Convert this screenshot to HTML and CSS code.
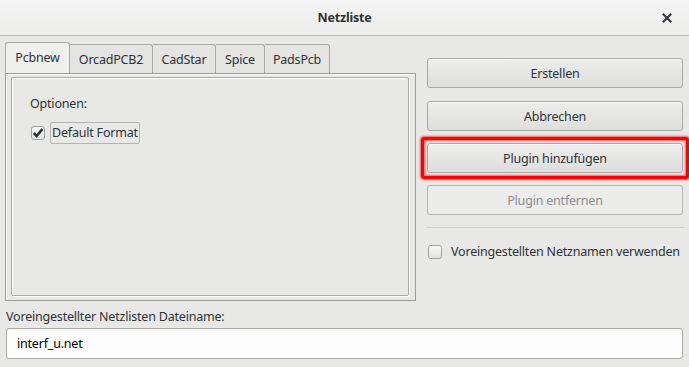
FILE: index.html
```html
<!DOCTYPE html>
<html lang="de">
<head>
<meta charset="utf-8">
<title>Netzliste</title>
<link rel="stylesheet" href="styles.css">
</head>
<body>
<div class="window">
  <header class="titlebar">
    <span class="title">Netzliste</span>
    <span class="close">
      <svg width="10" height="10" viewBox="0 0 10 10"><path d="M1.5 1.5 L8.5 8.5 M8.5 1.5 L1.5 8.5" stroke="#2e3436" stroke-width="2" stroke-linecap="square"/></svg>
    </span>
  </header>
  <main class="content">
    <div class="top-row">
      <section class="notebook">
        <div class="tabs">
          <div class="tab active">Pcbnew</div>
          <div class="tab">OrcadPCB2</div>
          <div class="tab">CadStar</div>
          <div class="tab">Spice</div>
          <div class="tab">PadsPcb</div>
        </div>
        <div class="page">
          <div class="page-inner">
            <div class="options-label">Optionen:</div>
            <div class="check-row">
              <span class="checkbox checked">
                <svg width="12" height="12" viewBox="0 0 12 12"><path d="M1.8 6 L4.6 9 L10.4 2.2" fill="none" stroke="#2e3436" stroke-width="2.6"/></svg>
              </span>
              <span class="focus-label">Default Format</span>
            </div>
          </div>
        </div>
      </section>
      <aside class="actions">
        <button class="btn">Erstellen</button>
        <button class="btn">Abbrechen</button>
        <div class="highlight"><button class="btn">Plugin hinzufügen</button></div>
        <button class="btn disabled">Plugin entfernen</button>
        <hr class="sep">
        <label class="check-line">
          <span class="checkbox"></span>
          <span>Voreingestellten Netznamen verwenden</span>
        </label>
      </aside>
    </div>
    <div class="file-label">Voreingestellter Netzlisten Dateiname:</div>
    <div class="entry">interf_u.net</div>
  </main>
</div>
</body>
</html>
```
FILE: styles.css
```css
* { box-sizing: border-box; }
html, body { margin: 0; padding: 0; }
body {
  width: 689px;
  height: 367px;
  background: #e8e8e7;
  font-family: "Noto Sans", "DejaVu Sans", sans-serif;
  font-size: 12.5px;
  letter-spacing: -0.2px;
  color: #2e3436;
  overflow: hidden;
}
.window { display: flex; flex-direction: column; height: 367px; }
.titlebar {
  height: 36px;
  flex: none;
  background: linear-gradient(#f4f4f4, #ededec);
  border-bottom: 1px solid #b8b8b5;
  display: flex;
  align-items: center;
  justify-content: center;
  position: relative;
}
.title { font-weight: bold; font-size: 12.5px; color: #2e3436; }
.close {
  position: absolute;
  right: 17px;
  top: 13px;
  width: 10px;
  height: 10px;
  display: flex;
}
.content { padding: 6px 6px 0 5px; display: flex; flex-direction: column; }
.top-row { display: flex; gap: 11px; }
.notebook { width: 411px; display: flex; flex-direction: column; }
.tabs { display: flex; height: 31px; align-items: flex-end; }
.tab {
  height: 29px;
  border: 1px solid #a9a9a6;
  border-bottom: none;
  border-left: none;
  background: #e4e4e3;
  display: flex;
  align-items: center;
  justify-content: center;
  padding: 0 5px;
  color: #2e3436;
  border-radius: 0 3px 0 0;
}
.tab.active {
  height: 31px;
  border-left: 1px solid #a9a9a6;
  border-radius: 3px 3px 0 0;
  background: #efefee;
  width: 65px;
  padding-bottom: 2px;
}
.tab:nth-child(2) { width: 83px; }
.tab:nth-child(3) { width: 63px; }
.tab:nth-child(4) { width: 49px; }
.tab:nth-child(5) { width: 65px; }
.page {
  height: 228px;
  border: 1px solid #9c9c99;
  box-shadow: inset 1px 1px 0 #fbfbfb;
  padding: 3px 6px 4px 5px;
  background: #e8e8e7;
}
.page-inner {
  height: 100%;
  border: 1px solid #a9a9a6;
  box-shadow: 1px 1px 0 #ffffff, inset 1px 1px 0 #ffffff;
  border-radius: 2px;
  padding: 17px 18px;
}
.options-label { line-height: 18px; }
.check-row { display: flex; align-items: center; gap: 5px; margin-top: 9px; margin-left: 1px; }
.checkbox {
  width: 14px;
  height: 14px;
  border: 1px solid #a2a29f;
  border-radius: 3px;
  background: linear-gradient(#f7f7f7, #e3e3e2);
  display: flex;
  align-items: center;
  justify-content: center;
  flex: none;
}
.focus-label {
  border: 1px solid #b4b4b1;
  border-radius: 2px;
  padding: 1px 1px;
  line-height: 18px;
}
.actions {
  flex: 1;
  padding-top: 16px;
  display: flex;
  flex-direction: column;
  align-items: stretch;
  width: 256px;
}
.btn {
  font: inherit;
  letter-spacing: inherit;
  color: #2e3436;
  height: 30px;
  width: 256px;
  border: 1px solid #a9a9a6;
  border-radius: 3px;
  background: linear-gradient(#ededec, #dededd);
  box-shadow: inset 0 1px 0 #f8f8f8;
  margin: 0 0 13px 0;
  padding: 0;
}
.highlight {
  margin: -7px -7px 6px -6px;
  padding: 6px;
  border: 3px solid #ff0000;
  border-radius: 3px;
  box-shadow: 0 0 2px 1px rgba(255,0,0,0.6), inset 0 0 2px 1px rgba(255,0,0,0.6);
  width: 268px;
}
.highlight .btn { margin: -3px 0 -3px -3px; display: block; }
.btn.disabled {
  color: #8b8e8f;
  background: #ececeb;
  box-shadow: none;
  border-color: #b5b5b3;
}
.sep {
  border: none;
  border-top: 1px solid #cfcfcd;
  margin: -1px 0 0 -1px;
  height: 0;
  width: 258px;
}
.check-line {
  display: flex;
  align-items: center;
  gap: 9px;
  margin-top: 15px;
  margin-left: 1px;
  white-space: nowrap;
}
.file-label { margin-top: 7px; margin-left: 1px; line-height: 18px; }
.entry {
  margin-top: 2px;
  margin-left: 1px;
  width: 677px;
  height: 31px;
  border: 1px solid #a9a9a6;
  border-radius: 3px;
  background: #fdfdfd;
  box-shadow: inset 0 1px 1px rgba(0,0,0,0.05);
  display: flex;
  align-items: center;
  padding: 0 10px;
  color: #000;
}
```
